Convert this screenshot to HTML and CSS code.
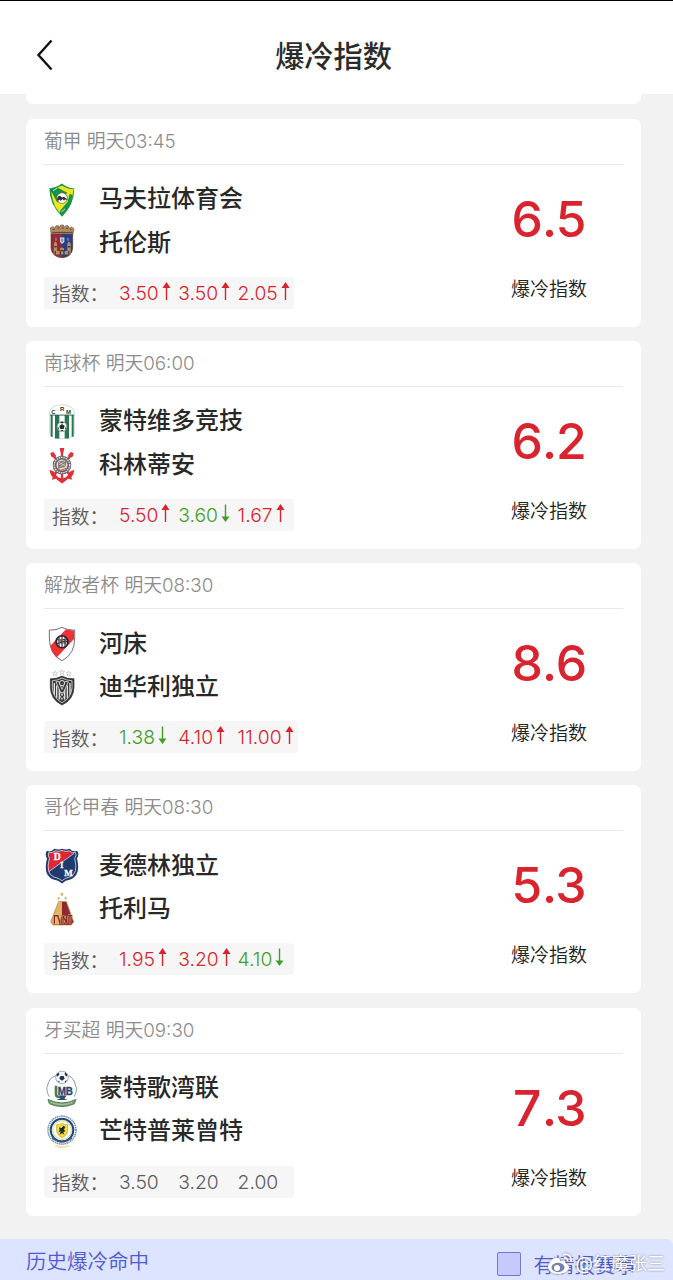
FILE: index.html
```html
<!DOCTYPE html>
<html lang="zh-CN">
<head>
  <meta charset="UTF-8">
  <title>爆冷指数</title>
  <link rel="stylesheet" href="styles.css">
</head>
<body>

  <!-- Arrow icons -->
  <svg class="sprite" width="0" height="0">
    <symbol id="up" viewBox="0 0 9 18"><path d="M4.5 0L8.5 6H5.2V18H3.8V6H0.5z" fill="currentColor"/></symbol>
    <symbol id="down" viewBox="0 0 9 18"><path d="M4.5 18L0.5 12.5H3.8V0.5H5.2V12.5H8.5z" fill="currentColor"/></symbol>
  </svg>

  <!-- Header -->
  <header class="header">
    <svg class="back" viewBox="0 0 18 32"><path d="M15.5 1.5L2.5 16L15.5 30.5" fill="none" stroke="#111" stroke-width="2.4"/></svg>
    <h1>爆冷指数</h1>
  </header>

  <!-- Match list -->
  <main class="list">
    <div class="card-end"></div>

    <section class="card">
      <div class="meta">葡甲 明天<span>03:45</span></div>
      <div class="card-body">
        <div class="match">
          <div class="team">
            <svg class="crest" viewBox="12 9 108 130">
              <path d="M28 40Q50 37 66 25Q81 38 103 40Q103 88 66 125Q29 88 28 40z" fill="#159447"/>
              <path d="M66 31Q81 42 101 42Q99 63 91 79L58 112L43 91L82 53L52 37zM34 49L58 94L49 100Q36 76 34 49z" fill="#f0e51e"/>
              <path d="M89 56L98 60Q91 91 69 117L60 108L83 80z" fill="#159447"/>
              <circle cx="66" cy="69" r="16" fill="#fff" stroke="#41684b" stroke-width="2"/>
              <path d="M51 74Q52 60 61 63L67 67L72 65L84 75L75 73L72 77L68 72L62 78L59 73L54 78z" fill="#34333b"/>
              <path d="M39 47L52 39M64 111L75 101" stroke="#d7ead4" stroke-width="3"/>
            </svg>
            <span>马夫拉体育会</span>
          </div>
          <div class="team">
            <svg class="crest" viewBox="12 139 108 130">
              <path d="M31 160L38 155L44 160L48 153H56L59 158L62 151H70L73 158L77 153H84L88 160L95 157L102 163L98 180H34z" fill="#b18b62" stroke="#6d4c34" stroke-width="2"/>
              <path d="M38 164H45M52 160H58M65 160H71M78 161H84M90 165H95M37 173H98" stroke="#604630" stroke-width="3"/>
              <path d="M33 178H98V220Q96 247 66 249Q36 247 33 220z" fill="#9b2635" stroke="#554241" stroke-width="2"/>
              <path d="M66 179H97V220Q94 247 66 248z" fill="#263e83"/>
              <path d="M42 205L47 200L51 206V229H60V221Q66 215 72 221V229H82V205L87 200L92 206V239H41z" fill="#b4905e"/>
              <path d="M43 216H50M83 216H91M46 229V239M86 229V239M61 241V230Q66 224 72 230V241" fill="none" stroke="#46394a" stroke-width="4"/>
              <path d="M60 188H73V201L66 208L60 201z" fill="#e8e9f0"/>
              <path d="M66 190V203M62 196H71" stroke="#536eae" stroke-width="3"/>
              <path d="M48 189V198M84 189V198" stroke="#7890c5" stroke-width="4"/>
            </svg>
            <span>托伦斯</span>
          </div>
          <div class="odds">
            <span class="odds-label">指数：</span>
            <span class="odd rise">3.50<svg><use href="#up"/></svg></span>
            <span class="odd rise">3.50<svg><use href="#up"/></svg></span>
            <span class="odd rise">2.05<svg><use href="#up"/></svg></span>
          </div>
        </div>
        <div class="score"><b>6.5</b><p>爆冷指数</p></div>
      </div>
    </section>

    <section class="card">
      <div class="meta">南球杯 明天<span>06:00</span></div>
      <div class="card-body">
        <div class="match">
          <div class="team">
            <svg class="crest" viewBox="12 9 108 130">
              <path d="M29 43Q34 24 66 23Q98 24 103 43V109Q100 124 66 125Q32 124 29 109z" fill="#fff" stroke="#b5c9bd" stroke-width="2"/>
              <path d="M32 54H38V119H32zM45 54H58V124H45zM74 54H87V124H74zM95 54H101V119H95z" fill="#267650"/>
              <path d="M30 54H102" stroke="#3a6953" stroke-width="3"/>
              <g class="mark" fill="#263a31" font-size="18"><text x="34" y="50">C</text><text x="60" y="42">R</text><text x="78" y="50">M</text></g>
              <circle cx="66" cy="89" r="15" fill="#f3f5f2" stroke="#6d8276" stroke-width="2"/>
              <path d="M66 81L74 87L71 96H61L58 87zM60 76L66 73L72 76L66 79zM53 88L57 94L54 98zM79 88L75 94L78 98zM60 102L66 98L72 102z" fill="#1f3029"/>
            </svg>
            <span>蒙特维多竞技</span>
          </div>
          <div class="team">
            <svg class="crest" viewBox="12 139 108 130">
              <path d="M59 151H73L70 164H62zM31 166L40 163L48 173L44 180L34 177zM101 166L92 163L84 173L88 180L98 177z" fill="#df3038"/>
              <path d="M42 176L92 235M90 176L40 235M66 157V250" stroke="#df3038" stroke-width="7"/>
              <path d="M29 216L43 222Q52 243 66 241Q81 243 89 222L103 216Q101 232 94 238L96 246L84 243Q76 251 66 257Q56 251 48 243L36 246L38 238Q30 231 29 216z" fill="#df3038"/>
              <circle cx="66" cy="202" r="28" fill="#69646a"/>
              <circle cx="66" cy="202" r="23" fill="none" stroke="#eee" stroke-width="4" stroke-dasharray="4 3"/>
              <circle cx="66" cy="202" r="18" fill="#dedbd8" stroke="#4c484d" stroke-width="2"/>
              <path d="M55 191L81 187L76 207L54 213z" fill="#88766e"/>
              <path d="M57 194L75 204M57 201L76 190M58 209L74 198" stroke="#ddd" stroke-width="2"/>
              <path d="M53 213L62 218L80 211" fill="none" stroke="#d35a55" stroke-width="3"/>
            </svg>
            <span>科林蒂安</span>
          </div>
          <div class="odds">
            <span class="odds-label">指数：</span>
            <span class="odd rise">5.50<svg><use href="#up"/></svg></span>
            <span class="odd fall">3.60<svg><use href="#down"/></svg></span>
            <span class="odd rise">1.67<svg><use href="#up"/></svg></span>
          </div>
        </div>
        <div class="score"><b>6.2</b><p>爆冷指数</p></div>
      </div>
    </section>

    <section class="card">
      <div class="meta">解放者杯 明天<span>08:30</span></div>
      <div class="card-body">
        <div class="match">
          <div class="team">
            <svg class="crest" viewBox="12 9 108 130">
              <path d="M28 33Q49 34 66 25Q83 34 104 33V56Q105 105 66 125Q28 106 28 56z" fill="#fff" stroke="#565257" stroke-width="2.5"/>
              <path d="M77 31L102 35V60L50 115Q35 102 31 80z" fill="#ee3037"/>
              <circle cx="66" cy="68" r="18" fill="#eee" stroke="#28262a" stroke-width="5"/>
              <text class="mark" x="49" y="76" fill="#222" font-size="22" textLength="35" lengthAdjust="spacingAndGlyphs">CARP</text>
              <path d="M57 51V85M66 50V87M75 51V85" stroke="#28262a" stroke-width="3"/>
            </svg>
            <span>河床</span>
          </div>
          <div class="team">
            <svg class="crest" viewBox="12 139 108 130">
              <g fill="#fff" stroke="#aaa" stroke-width="1.5">
                <path id="star" d="M66 149L68 155H74L69 159L71 165L66 161L61 165L63 159L58 155H64z"/>
                <use href="#star" x="-21" y="4"/><use href="#star" x="20" y="4"/>
              </g>
              <path d="M31 177Q50 178 66 169Q82 178 102 177V203Q101 239 66 256Q32 239 31 203z" fill="#39393b" stroke="#29292b" stroke-width="2"/>
              <path d="M37 183Q53 182 66 175Q79 182 96 183V204Q94 234 66 249Q39 234 37 204z" fill="none" stroke="#ddd" stroke-width="2.5"/>
              <path d="M43 190V224M50 197V234M58 208V239M74 208V239M82 197V234M90 190V224" stroke="#e5e5e5" stroke-width="4"/>
              <path d="M48 186L66 228L85 186L76 185L66 209L56 185z" fill="#353537" stroke="#e2e2e2" stroke-width="2.5"/>
              <circle cx="66" cy="190" r="8" fill="#464648" stroke="#eee" stroke-width="2.5"/>
              <path d="M56 218H76M60 228L66 240L73 228" fill="none" stroke="#bbb" stroke-width="3"/>
            </svg>
            <span>迪华利独立</span>
          </div>
          <div class="odds">
            <span class="odds-label">指数：</span>
            <span class="odd fall">1.38<svg><use href="#down"/></svg></span>
            <span class="odd rise">4.10<svg><use href="#up"/></svg></span>
            <span class="odd rise">11.00<svg><use href="#up"/></svg></span>
          </div>
        </div>
        <div class="score"><b>8.6</b><p>爆冷指数</p></div>
      </div>
    </section>

    <section class="card">
      <div class="meta">哥伦甲春 明天<span>08:30</span></div>
      <div class="card-body">
        <div class="match">
          <div class="team">
            <svg class="crest" viewBox="12 9 108 130">
              <path d="M21 29Q33 34 43 23Q57 28 66 23Q79 28 89 23Q99 34 111 29Q119 39 111 52Q124 104 91 115Q76 117 66 127Q55 117 40 115Q8 104 21 52Q13 40 21 29z" fill="#203a70"/>
              <path d="M26 34Q36 38 45 29Q57 33 66 28Q79 34 87 29Q94 36 101 36L26 91Q21 75 28 52Q22 42 26 34z" fill="#df2635"/>
              <path d="M27 33Q36 38 45 29Q57 33 66 28Q79 34 87 29Q97 38 106 34Q111 42 104 52Q116 98 89 108Q75 110 66 119Q56 110 42 108Q16 98 28 52Q22 42 27 33zM102 37L26 92" fill="none" stroke="#fff" stroke-width="2"/>
              <g class="mark slab" fill="#fff" stroke="#fff" stroke-width="0.8" font-size="29"><text x="41" y="57">D</text><text x="61" y="82" font-size="24">I</text><text x="73" y="104" font-size="27">M</text></g>
            </svg>
            <span>麦德林独立</span>
          </div>
          <div class="team">
            <svg class="crest" viewBox="12 139 108 130">
              <path d="M66 151L68 155L72 156L68 159L69 163L66 161L62 163L63 159L59 156L64 155zM57 164L59 168L63 170L58 171L56 175L54 170L50 169L55 168zM77 164L79 168L83 170L78 171L76 175L74 170L70 169L75 168z" fill="#d8ac60"/>
              <path d="M56 179H79L101 240L94 250H39L32 240z" fill="#8c292e" stroke="#c6954a" stroke-width="2"/>
              <path d="M56 181H66V218L57 248H39L33 240z" fill="#e3b364"/>
              <path d="M43 246V222H54L60 246M69 246V222L79 244V222M84 222H97M90 222V246" fill="none" stroke="#edcb85" stroke-width="7"/>
              <path d="M43 246V222H54L60 246M69 246V222L79 244V222M84 222H97M90 222V246" fill="none" stroke="#8a272c" stroke-width="4"/>
            </svg>
            <span>托利马</span>
          </div>
          <div class="odds">
            <span class="odds-label">指数：</span>
            <span class="odd rise">1.95<svg><use href="#up"/></svg></span>
            <span class="odd rise">3.20<svg><use href="#up"/></svg></span>
            <span class="odd fall">4.10<svg><use href="#down"/></svg></span>
          </div>
        </div>
        <div class="score"><b>5.3</b><p>爆冷指数</p></div>
      </div>
    </section>

    <section class="card">
      <div class="meta">牙买超 明天<span>09:30</span></div>
      <div class="card-body">
        <div class="match">
          <div class="team">
            <svg class="crest" viewBox="12 9 108 130">
              <path d="M47 35Q26 41 22 68M87 35Q104 44 107 68" fill="none" stroke="#555e6b" stroke-width="2"/>
              <path d="M20 68Q20 89 28 98M110 68Q110 89 102 98" fill="none" stroke="#87a594" stroke-width="3"/>
              <circle cx="66" cy="40" r="19" fill="#f4f6f8" stroke="#7a8792" stroke-width="2"/>
              <path d="M61 36H71L74 44L66 50L58 44zM49 31L56 25L58 32L51 38zM75 24L82 31L81 38L74 32zM52 49L59 52L58 56zM74 52L81 48L76 56z" fill="#233153"/>
              <path d="M48 65V91Q48 101 69 98" fill="none" stroke="#438546" stroke-width="8"/>
              <text class="mark" x="53" y="92" fill="#28446f" stroke="#28446f" font-size="30" textLength="46" lengthAdjust="spacingAndGlyphs">MB</text>
              <path d="M58 94H80L73 104L83 108H49L61 103z" fill="#304a71"/>
              <path d="M24 106Q66 127 108 106L103 119Q66 136 28 119z" fill="#7da46e" stroke="#557d60" stroke-width="3"/>
              <path d="M34 115Q66 127 98 115" fill="none" stroke="#ced9c5" stroke-width="3" stroke-dasharray="3 2"/>
            </svg>
            <span>蒙特歌湾联</span>
          </div>
          <div class="team">
            <svg class="crest" viewBox="12 139 108 130">
              <circle cx="66" cy="199" r="42" fill="none" stroke="#6b94ad" stroke-width="5" stroke-dasharray="4 2"/>
              <circle cx="66" cy="199" r="34" fill="#fff" stroke="#24447c" stroke-width="6"/>
              <circle cx="66" cy="199" r="28" fill="none" stroke="#d5d66e" stroke-width="3"/>
              <path d="M50 183Q59 184 66 179Q74 184 83 183V203Q81 215 66 222Q52 215 50 203z" fill="#f2df39" stroke="#a4a33a" stroke-width="2"/>
              <path d="M57 191L65 193L70 186L76 190L72 197L76 203L70 204L73 213L66 208L59 214L62 202L55 206L59 198z" fill="#252829"/>
              <path d="M37 222Q66 245 95 222" fill="none" stroke="#315481" stroke-width="5"/>
              <path d="M43 242Q66 252 89 242L85 250Q66 256 47 250z" fill="#eee4ac"/>
            </svg>
            <span>芒特普莱曾特</span>
          </div>
          <div class="odds">
            <span class="odds-label">指数：</span>
            <span class="odd">3.50</span>
            <span class="odd">3.20</span>
            <span class="odd">2.00</span>
          </div>
        </div>
        <div class="score"><b>7.3</b><p>爆冷指数</p></div>
      </div>
    </section>
  </main>

  <!-- Bottom bar -->
  <footer class="bottom">
    <span>历史爆冷命中</span>
    <label class="filter"><i class="box"></i>有情报赛事</label>
    <div class="watermark">
      <svg viewBox="0 0 26 22">
        <path d="M10 5C5 5 1 10 1 14C1 18 6 21 11 21C17 21 22 18 22 14C22 12 20 11 18 10C19 8 18 6 13 8C13 6 13 5 10 5z" fill="#fff"/>
        <ellipse cx="11" cy="14.5" rx="6.5" ry="4.7" fill="#777fae"/>
        <circle cx="10" cy="15" r="3" fill="#fff"/>
        <path d="M16 1.5Q25 0 24 9M17 5Q21 4.5 20.5 8.5" fill="none" stroke="#fff" stroke-width="1.8"/>
      </svg>
      <span>@红魔张三</span>
    </div>
  </footer>

</body>
</html>
```

FILE: styles.css
```css
:root {
  --red: #d9232e;
  --green: #429f25;
  --blue: #5058d2;
}
* { margin: 0; padding: 0; box-sizing: border-box; }
body {
  font-family: Inter, "Noto Sans CJK SC", sans-serif;
  background: #f2f2f2;
  width: 673px;
  height: 1280px;
  overflow: hidden;
  display: flex;
  flex-direction: column;
}
.sprite { display: none; }
.header {
  display: grid;
  grid-template-columns: 60px 1fr 60px;
  align-items: center;
  height: 94px;
  padding: 14px 0 0;
  background: #fff;
  border-top: 1px solid #000;
}
.back { width: 18px; height: 32px; margin-left: 36px; }
h1 {
  font-size: 29.2px;
  font-weight: 500;
  line-height: 40px;
  color: #2b2b2b;
  text-align: center;
  margin: 5px 0 0 -6px;
}
.list {
  flex: 1;
  display: flex;
  flex-direction: column;
  gap: 14.2px;
  padding: 0 32px 0 26px;
}
.card-end {
  height: 10px;
  margin-bottom: 0.7px;
  background: #fff;
  border-radius: 0 0 7px 7px;
}
.card {
  height: 208px;
  padding: 0 18px;
  background: #fff;
  border-radius: 7px;
}
.meta {
  height: 46px;
  line-height: 46px;
  border-bottom: 1px solid #e8e8e8;
  font-size: 18.8px;
  font-weight: 350;
  color: #8c8c8c;
}
.card-body { display: flex; justify-content: space-between; }
.match { padding-top: 13px; }
.team {
  display: flex;
  align-items: center;
  height: 43.5px;
  font-size: 24px;
  font-weight: 500;
  line-height: 34px;
  color: #282828;
}
.team span { padding-bottom: 1px; }
.crest { width: 36px; height: 43.5px; margin-right: 19px; }
.mark { font-family: "Liberation Sans", sans-serif; font-weight: 700; }
.slab { font-family: "Liberation Serif", serif; }
.odds {
  display: inline-flex;
  align-items: center;
  height: 32px;
  margin-top: 12px;
  padding: 0 5px 0 8px;
  background: #f6f6f6;
  border-radius: 3px;
  font-size: 19.3px;
  font-weight: 350;
  color: #5c5c5c;
}
.odds-label { width: 67px; font-size: 18.8px; white-space: nowrap; }
.odd { display: flex; align-items: center; min-width: 59.3px; }
.odd:last-child { min-width: 51px; }
.odd svg { width: 9px; height: 18px; margin: -4px -1px 0 3px; }
.rise { color: var(--red); }
.fall { color: var(--green); }
.score { width: 148px; padding-top: 24px; text-align: center; }
.score b {
  display: block;
  font-size: 50px;
  font-weight: 500;
  font-variant-numeric: tabular-nums;
  letter-spacing: -0.8px;
  line-height: 60px;
  color: var(--red);
}
.score p {
  margin-top: 27px;
  font-size: 19px;
  font-weight: 350;
  line-height: 28px;
  color: #222;
}
.bottom {
  position: relative;
  display: flex;
  justify-content: space-between;
  align-items: center;
  height: 41px;
  padding: 2px 37px 0 26px;
  background: #dce4ff;
  border-radius: 0 6px 0 0;
  font-size: 20.5px;
  font-weight: 350;
  color: var(--blue);
}
.bottom > span { padding-bottom: 1px; }
.filter { display: flex; align-items: center; padding-top: 7px; }
.box {
  width: 24px;
  height: 24px;
  margin-right: 13px;
  background: #c5c9fc;
  border: 1px solid #7378c9;
  border-radius: 2px;
}
/* watermark sits over the filter label */
.watermark {
  position: absolute;
  right: 8px;
  bottom: 4px;
  display: flex;
  align-items: center;
  gap: 3px;
  font-size: 18px;
  font-weight: 400;
  line-height: 24px;
  color: #fff;
  text-shadow: 0 0 2px rgba(90, 90, 90, 0.8);
}
.watermark svg { width: 26px; height: 22px; filter: drop-shadow(0 0 1px #777); }
```
